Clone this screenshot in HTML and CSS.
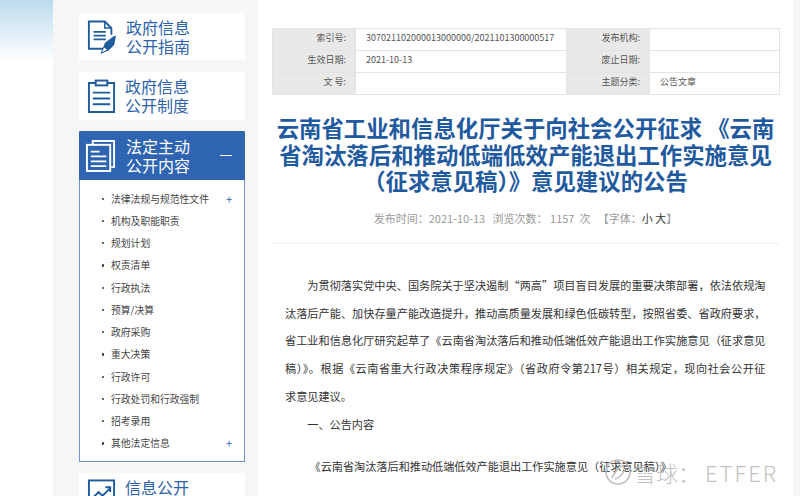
FILE: index.html
```html
<!DOCTYPE html>
<html lang="zh-CN">
<head>
<meta charset="utf-8">
<title>云南省工业和信息化厅公告</title>
<link rel="stylesheet" href="styles.css">
</head>
<body>
<div class="page">
  <div class="strip"><div class="strip-glow"></div></div>
  <aside class="side">
    <a class="card">
      <svg class="ico" width="30" height="36" viewBox="0 0 32 37" fill="none" stroke="#1f5c9e" stroke-width="2"><path d="M20 31H2V2h17l7 7v7"/><path d="M19 2v7h7" stroke-width="1.6"/><path d="M7 13h13M7 17h13M7 21h13" stroke-width="1.8"/><path d="M15 36l4-11 9-7 3-1-2 10-6 6z" fill="#1f5c9e" stroke="none"/><path d="M15 36l3-7 4 3z" fill="#fff" stroke="#1f5c9e" stroke-width="1"/></svg>
      <span class="card-t">政府信息<br>公开指南</span>
    </a>
    <a class="card card-b">
      <svg class="ico" width="29" height="35" viewBox="0 0 30 36" fill="none" stroke="#1f5c9e" stroke-width="2"><path d="M9 4H2v30h26V4h-7"/><rect x="9" y="1.5" width="12" height="5"/><path d="M6 14h18M6 20h18M6 26h18"/></svg>
      <span class="card-t">政府信息<br>公开制度</span>
    </a>
    <section class="menu">
      <div class="menu-head">
        <svg class="ico-w" width="31" height="33" viewBox="0 0 32 34" fill="none" stroke="#fff" stroke-width="2"><path d="M8 5V2h22v27h-3"/><rect x="2" y="6" width="24" height="27"/><path d="M6 13h9M6 18h16M6 23h16M6 28h16" stroke-width="1.8"/></svg>
        <span class="card-t white">法定主动<br>公开内容</span>
        <span class="minus"></span>
      </div>
      <ul class="menu-list">
        <li><span>法律法规与规范性文件</span><b>+</b></li>
        <li><span>机构及职能职责</span></li>
        <li><span>规划计划</span></li>
        <li><span>权责清单</span></li>
        <li><span>行政执法</span></li>
        <li><span>预算/决算</span></li>
        <li><span>政府采购</span></li>
        <li><span>重大决策</span></li>
        <li><span>行政许可</span></li>
        <li><span>行政处罚和行政强制</span></li>
        <li><span>招考录用</span></li>
        <li><span>其他法定信息</span><b>+</b></li>
      </ul>
    </section>
    <a class="card card-last">
      <svg class="ico" width="29" height="30" viewBox="0 0 30 30" fill="none" stroke="#1f5c9e" stroke-width="2"><rect x="2" y="2" width="26" height="26"/><path d="M6 20l6-6 4 4 8-8M19 9h5v5"/></svg>
      <span class="card-t">信息公开</span>
    </a>
  </aside>
  <main class="main">
    <table class="meta">
      <colgroup><col class="c1"><col class="c2"><col class="c3"><col class="c4"></colgroup>
      <tr><th>索引号:</th><td>307021102000013000000/2021101300000517</td><th>发布机构:</th><td></td></tr>
      <tr><th>生效日期:</th><td>2021-10-13</td><th>废止日期:</th><td></td></tr>
      <tr><th>文 号:</th><td></td><th>主题分类:</th><td>公告文章</td></tr>
    </table>
    <h1 class="title">云南省工业和信息化厅关于向社会公开征求 《云南省淘汰落后和推动低端低效产能退出工作实施意见（征求意见稿）》意见建议的公告</h1>
    <div class="info">发布时间：2021-10-13 &nbsp; 浏览次数： 1157 &nbsp;次 &nbsp; 【字体：<em>小 大</em>】</div>
    <article class="body">
      <p>为贯彻落实党中央、国务院关于坚决遏制“两高”项目盲目发展的重要决策部署，依法依规淘汰落后产能、加快存量产能改造提升，推动高质量发展和绿色低碳转型，按照省委、省政府要求，省工业和信息化厅研究起草了《云南省淘汰落后和推动低端低效产能退出工作实施意见（征求意见稿）》。根据《云南省重大行政决策程序规定》（省政府令第217号）相关规定，现向社会公开征<span class="nb">求意见建议。</span></p>
      <p>一、公告内容</p>
      <p class="quote">《云南省淘汰落后和推动低端低效产能退出工作实施意见（征求意见稿）》</p>
    </article>
  </main>
  <div class="edge"></div>
  <div class="mark">
    <svg width="28" height="28" viewBox="0 0 28 28" fill="none" stroke="#bdbdbd" stroke-width="1.6"><circle cx="14" cy="14" r="12"/><path d="M8 20c3-7 7-11 12-13M11 21c4-1 7-4 9-8"/></svg>
    <span>雪球：<i>ETFER</i></span>
  </div>
</div>
</body>
</html>
```
FILE: styles.css
```css
* { box-sizing: border-box; }
html, body { margin: 0; padding: 0; }
body { width: 800px; height: 496px; overflow: hidden; background: #fff; font-family: "Noto Sans CJK SC", "Liberation Sans", sans-serif; }
.page { position: relative; display: flex; width: 800px; height: 496px; overflow: hidden; }
.strip { width: 53px; flex: none; background: #fff; }
.strip-glow { height: 62px; background: linear-gradient(#bcdcee, #fff); }
.side { width: 205px; flex: none; background: #f6f6f6; padding: 13px 13px 0 26px; }
.card { display: flex; align-items: center; height: 47px; background: #fff; padding-left: 7px; margin-bottom: 12px; }
.card-b { height: 48px; margin-bottom: 11px; }
.ico { flex: none; margin: 0 9px 0 1px; }
.ico-w { flex: none; margin-right: 10px; }
.card-t { font-size: 16px; line-height: 19px; color: #2c62ab; white-space: nowrap; }
.card-t.white { color: #fff; }
.menu { border: 1px solid #6f94cf; border-top: 0; background: #fff; height: 331px; margin-bottom: 11px; }
.menu-head { display: flex; align-items: center; height: 49px; margin: 0 -1px; padding-left: 6px; background: #2f64b3; border-radius: 2px 2px 0 0; }
.minus { width: 12px; height: 1.6px; background: #fff; margin-left: 30px; }
.menu-list { list-style: none; margin: 0; padding: 7.5px 0 0 22px; }
.menu-list li { position: relative; display: flex; justify-content: space-between; align-items: center; height: 22.25px; padding: 0 12px 0 9px; font-size: 9.8px; color: #444; }
.menu-list li::before { content: ""; position: absolute; left: 0; top: 10px; width: 2.4px; height: 2.4px; background: #333; border-radius: 50%; }
.menu-list b { font-weight: 400; font-size: 11px; color: #2f64b3; }
.card-last { align-items: flex-start; padding-top: 5px; height: 23px; margin: 0; }
.main { width: 535px; flex: none; margin-top: 12px; background: #fff; padding: 16px 14px 0; }
.meta { width: 507px; border-collapse: collapse; table-layout: fixed; font-size: 9px; line-height: 12px; color: #555; }
.c1 { width: 83px; } .c2 { width: 211px; } .c3 { width: 83px; } .c4 { width: 130px; }
.meta tr { height: 22px; }
.meta th, .meta td { border: 1px solid #e4e4e4; padding: 0 9px 3px; font-weight: 400; white-space: nowrap; overflow: hidden; }
.meta th { background: #e9e9e9; text-align: right; }
.meta td { padding-left: 10px; }
.title { margin: 19px 0 0; font-size: 22.4px; line-height: 26.6px; font-weight: 700; color: #1f5a9f; text-align: center; }
.info { margin-top: 17px; padding-bottom: 18px; border-bottom: 1px solid #f0f0f0; font-size: 11px; line-height: 14px; color: #999; text-align: center; }
.info em { font-style: normal; color: #333; }
.body { padding: 28px 13.5px 0 13px; font-size: 11.15px; line-height: 27.8px; color: #333; }
.body p { margin: 0; text-indent: 2em; text-align: justify; }
.body .nb { white-space: nowrap; }
.body .quote { margin-top: 14px; text-indent: 2.2em; white-space: nowrap; }
.edge { flex: 1; background: #f6f6f6; }
.mark { position: absolute; left: 604px; top: 458px; display: flex; align-items: center; gap: 2px; font-size: 22px; line-height: 28px; font-weight: 300; color: rgba(170,170,170,.75); white-space: nowrap; }
.mark i { font-style: normal; letter-spacing: 2px; margin-left: 5px; }
```
